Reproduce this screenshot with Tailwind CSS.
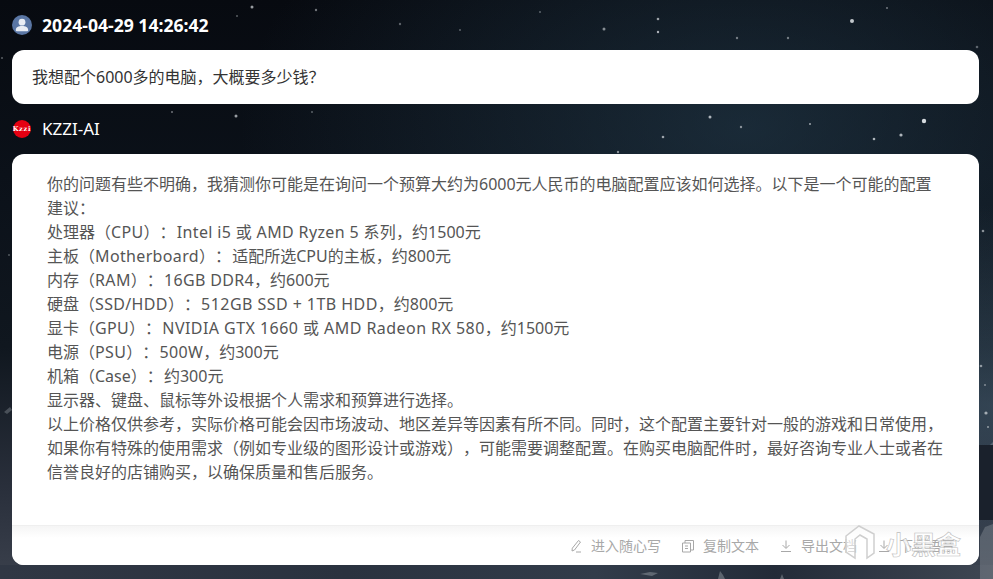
<!DOCTYPE html>
<html lang="en">
<head>
    <meta charset="UTF-8">
    <title>KZZI-AI</title>
    <script src="https://cdn.jsdelivr.net/npm/@tailwindcss/browser@4"></script>
</head>
<body class="w-[993px] h-[579px] overflow-hidden relative bg-[#0a0f18] font-['Noto_Sans','Noto_Sans_CJK_SC',sans-serif] [text-spacing-trim:space-all]">
    <!-- night sky backdrop -->
    <div class="absolute inset-0 bg-[linear-gradient(180deg,#070a10_0%,#0b1119_30%,#10171f_60%,#2a303c_85%,#3a404c_100%)]"></div>
    <div class="absolute inset-0 bg-[radial-gradient(ellipse_at_75%_22%,rgba(45,75,95,0.45),transparent_48%)]"></div>
    <div class="absolute inset-0 bg-[radial-gradient(ellipse_at_100%_70%,rgba(70,95,115,0.55),transparent_35%)]"></div>
    <div class="absolute left-0 right-0 bottom-0 h-[14px] bg-[linear-gradient(90deg,#303744_0%,#2a323f_35%,#323c4a_60%,#232b38_78%,#3f4753_100%)]"></div>
    <svg class="absolute inset-0 blur-[0.6px]" width="993" height="579" fill="#d5dade">
        <circle cx="252" cy="7" r="1.5" opacity=".7"/><circle cx="316" cy="10" r="1.2" opacity=".5"/>
        <circle cx="237" cy="16" r="1" opacity=".4"/><circle cx="658" cy="19" r="1.3" opacity=".7"/>
        <circle cx="658" cy="32" r="1.2" opacity=".8"/><circle cx="737" cy="38" r="1.2" opacity=".5"/>
        <circle cx="788" cy="38" r="1.2" opacity=".5"/><circle cx="852" cy="21" r="2" opacity=".9"/>
        <circle cx="604" cy="29" r="1.5" opacity=".6"/><circle cx="887" cy="8" r="1" opacity=".5"/>
        <circle cx="977" cy="47" r="1.3" opacity=".4"/><circle cx="236" cy="116" r="1.5" opacity=".7"/>
        <circle cx="172" cy="112" r="1" opacity=".5"/><circle cx="710" cy="117" r="1.5" opacity=".8"/>
        <circle cx="741" cy="127" r="1.2" opacity=".6"/><circle cx="663" cy="137" r="1.3" opacity=".7"/>
        <circle cx="924" cy="121" r="2.2"/><circle cx="901" cy="135" r="1.6" opacity=".8"/>
        <circle cx="874" cy="139" r="1.3" opacity=".8"/><circle cx="810" cy="124" r="1" opacity=".7"/>
        <circle cx="618" cy="152" r="1.2" opacity=".6"/><circle cx="312" cy="112" r="1" opacity=".4"/>
        <circle cx="2" cy="58" r="1" opacity=".4"/><circle cx="460" cy="30" r="1" opacity=".4"/>
        <circle cx="540" cy="12" r="1" opacity=".4"/><circle cx="400" cy="24" r="1.2" opacity=".4"/>
        <circle cx="983" cy="231" r="1.3" opacity=".6"/><circle cx="981" cy="366" r="1.3" opacity=".6"/>
        <circle cx="985" cy="385" r="1" opacity=".5"/><circle cx="986" cy="413" r="1.6" opacity=".7"/>
        <circle cx="988" cy="427" r="1" opacity=".6"/><circle cx="9" cy="255" r="1" opacity=".35"/>
        <path d="M980 579v-42l5-10 8-3v55z" opacity=".22"/>
        <path d="M718 579l2-8 3 4 2 4zM780 579l2-5 2 5zM640 574l10-2 8 1-6 3z" opacity=".3"/>
        <path d="M4 412l6-5 2 3-5 4zM985 450l8-8v8z" opacity=".25"/>
    </svg>
    <div class="absolute right-0 top-[445px] w-[14px] h-[75px] bg-[#1a212c]"></div>

    <div class="relative flex flex-col h-full pl-3 pr-[14px]">
        <div class="h-[50px] flex items-center gap-[10px]">
            <svg class="w-5 h-5 shrink-0" viewBox="0 0 20 20">
                <circle cx="10" cy="10" r="10" fill="#5a76a4"/>
                <circle cx="10" cy="7.2" r="3.4" fill="#e9edf4"/>
                <path d="M3.8 15.5c0-3.2 2.6-4.4 6.2-4.4s6.2 1.2 6.2 4.4c0 .5-.3.8-.8.8H4.6c-.5 0-.8-.3-.8-.8z" fill="#e9edf4"/>
            </svg>
            <span class="text-white font-bold text-[17.6px]">2024-04-29 14:26:42</span>
        </div>
        <div class="h-[54px] bg-white rounded-xl flex items-center px-5 text-[16px] text-[#333]">我想配个6000多的电脑，大概要多少钱？</div>

        <div class="h-[50px] flex items-center gap-[11px]">
            <div class="w-[18px] h-[18px] ml-[1px] rounded-full bg-[#e60012] flex items-center justify-center text-white text-[6.5px] font-bold leading-none tracking-[0.8px] font-['DejaVu_Serif',serif]">Kzzi</div>
            <span class="text-white text-[17px]">KZZI-AI</span>
        </div>
        <div class="h-[411px] bg-white rounded-xl flex flex-col overflow-hidden">
            <div class="h-[371px] pt-[18px] pl-[35px] pr-[34px] text-[16px] leading-[24px] text-[#555]">
                <p>你的问题有些不明确，我猜测你可能是在询问一个预算大约为6000元人民币的电脑配置应该如何选择。以下是一个可能的配置建议：</p>
                <p>处理器（<span class="tracking-[0.35px]">CPU</span>）<span class="[word-spacing:-3px]">： </span><span class="tracking-[0.35px]">Intel i5 或 AMD Ryzen 5 系列</span>，约1500元</p>
                <p>主板（<span class="tracking-[0.35px]">Motherboard</span>）<span class="[word-spacing:-3px]">： </span>适配所选CPU的主板，约800元</p>
                <p>内存（<span class="tracking-[0.35px]">RAM</span>）<span class="[word-spacing:-3px]">： </span><span class="tracking-[0.35px]">16GB DDR4</span>，约600元</p>
                <p>硬盘（<span class="tracking-[0.35px]">SSD/HDD</span>）<span class="[word-spacing:-3px]">： </span><span class="tracking-[0.45px]">512GB SSD + 1TB HDD</span>，约800元</p>
                <p>显卡（<span class="tracking-[0.35px]">GPU</span>）<span class="[word-spacing:-3px]">： </span><span class="tracking-[0.45px]">NVIDIA GTX 1660 或 AMD Radeon RX 580</span>，约1500元</p>
                <p>电源（<span class="tracking-[0.35px]">PSU</span>）<span class="[word-spacing:-3px]">： </span><span class="tracking-[0.35px]">500W</span>，约300元</p>
                <p>机箱（Case）<span class="[word-spacing:-3px]">： </span>约300元</p>
                <p>显示器、键盘、鼠标等外设根据个人需求和预算进行选择。</p>
                <p>以上价格仅供参考，实际价格可能会因市场波动、地区差异等因素有所不同。同时，这个配置主要针对一般的游戏和日常使用，如果你有特殊的使用需求（例如专业级的图形设计或游戏），可能需要调整配置。在购买电脑配件时，最好咨询专业人士或者在信誉良好的店铺购买，以确保质量和售后服务。</p>
            </div>
            <div class="flex-1 border-t border-[#efefef] bg-[linear-gradient(180deg,#f5f5f5,#ffffff_12px)] flex items-center justify-end pr-[24px] gap-[20px] text-[14px] text-[#a8a8a8]">
                <div class="flex items-center gap-2">
                    <svg class="w-[14px] h-[14px]" viewBox="0 0 14 14" fill="none" stroke="#a8a8a8"><path d="M9.5 1.5l2 1.5-6 8-2.5 1 .3-2.8zM7 13h5"/></svg>
                    <span>进入随心写</span>
                </div>
                <div class="flex items-center gap-2">
                    <svg class="w-[14px] h-[14px]" viewBox="0 0 14 14" fill="none" stroke="#a8a8a8"><path d="M1.5 4h8v9h-8zM4 4V1.5h8.5V11H9.5M4 7h3M4 9.5h3"/></svg>
                    <span>复制文本</span>
                </div>
                <div class="flex items-center gap-2">
                    <svg class="w-[14px] h-[14px]" viewBox="0 0 14 14" fill="none" stroke="#a8a8a8"><path d="M7 1.5v7.5M3.5 6L7 9.5 10.5 6M2 12.5h10"/></svg>
                    <span>导出文档</span>
                </div>
                <div class="flex items-center gap-2">
                    <svg class="w-[14px] h-[14px]" viewBox="0 0 14 14" fill="none" stroke="#a8a8a8"><path d="M7 1.5v7.5M3.5 6L7 9.5 10.5 6M2 12.5h10"/></svg>
                    <span>下载语音</span>
                </div>
            </div>
        </div>
    </div>

    <!-- watermark over the footer -->
    <div class="absolute left-[845px] top-[524px] flex items-center gap-[11px]">
        <svg class="w-[30px] h-[40px]" viewBox="0 0 30 40" fill="none" stroke="#cfcfcf" stroke-width="1.5">
            <path d="M1 12L14 2l15 8v19l-7 5V15l-7-4-5 4v19l-9-6z" fill="#ffffff" fill-opacity=".55"/>
        </svg>
        <span class="text-[25px] leading-none font-bold text-white/80 [-webkit-text-stroke:0.6px_#bdbdbd]">小黑盒</span>
    </div>
</body>
</html>
